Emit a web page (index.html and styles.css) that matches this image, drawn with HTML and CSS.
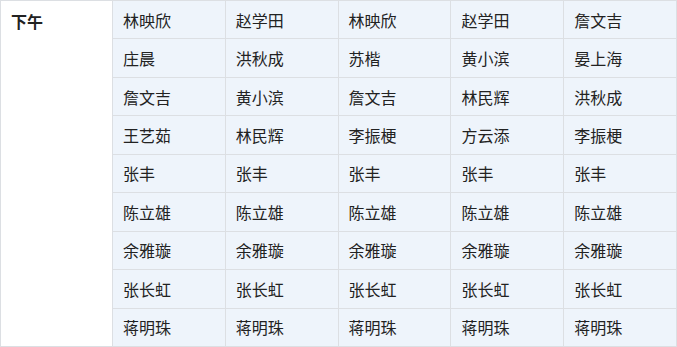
FILE: index.html
```html
<!DOCTYPE html>
<html>
<head>
<meta charset="utf-8">
<link rel="stylesheet" href="styles.css">
</head>
<body>
<table class="sched">
  <tr><th class="period" rowspan="9">下午</th><td>林映欣</td><td>赵学田</td><td>林映欣</td><td>赵学田</td><td>詹文吉</td></tr>
  <tr><td>庄晨</td><td>洪秋成</td><td>苏楷</td><td>黄小滨</td><td>晏上海</td></tr>
  <tr><td>詹文吉</td><td>黄小滨</td><td>詹文吉</td><td>林民辉</td><td>洪秋成</td></tr>
  <tr><td>王艺茹</td><td>林民辉</td><td>李振梗</td><td>方云添</td><td>李振梗</td></tr>
  <tr><td>张丰</td><td>张丰</td><td>张丰</td><td>张丰</td><td>张丰</td></tr>
  <tr><td>陈立雄</td><td>陈立雄</td><td>陈立雄</td><td>陈立雄</td><td>陈立雄</td></tr>
  <tr><td>余雅璇</td><td>余雅璇</td><td>余雅璇</td><td>余雅璇</td><td>余雅璇</td></tr>
  <tr><td>张长虹</td><td>张长虹</td><td>张长虹</td><td>张长虹</td><td>张长虹</td></tr>
  <tr><td>蒋明珠</td><td>蒋明珠</td><td>蒋明珠</td><td>蒋明珠</td><td>蒋明珠</td></tr>
</table>
</body>
</html>
```
FILE: styles.css
```css
html, body {
  margin: 0;
  padding: 0;
  background: #fff;
}
.sched {
  border-collapse: collapse;
  width: 677px;
  table-layout: fixed;
  font-family: "Noto Sans CJK SC", sans-serif;
  font-size: 16px;
  color: #222;
}
.sched th, .sched td {
  border: 1px solid #dcdfe3;
  padding: 0 10px;
  height: 37.45px;
  line-height: 20px;
  text-align: left;
  font-weight: normal;
}
.sched td {
  background: #eef4fb;
  vertical-align: middle;
}
.sched .period {
  width: 91px;
  background: #fff;
  vertical-align: top;
  font-weight: bold;
  padding-top: 10px;
  color: #222;
}
```
